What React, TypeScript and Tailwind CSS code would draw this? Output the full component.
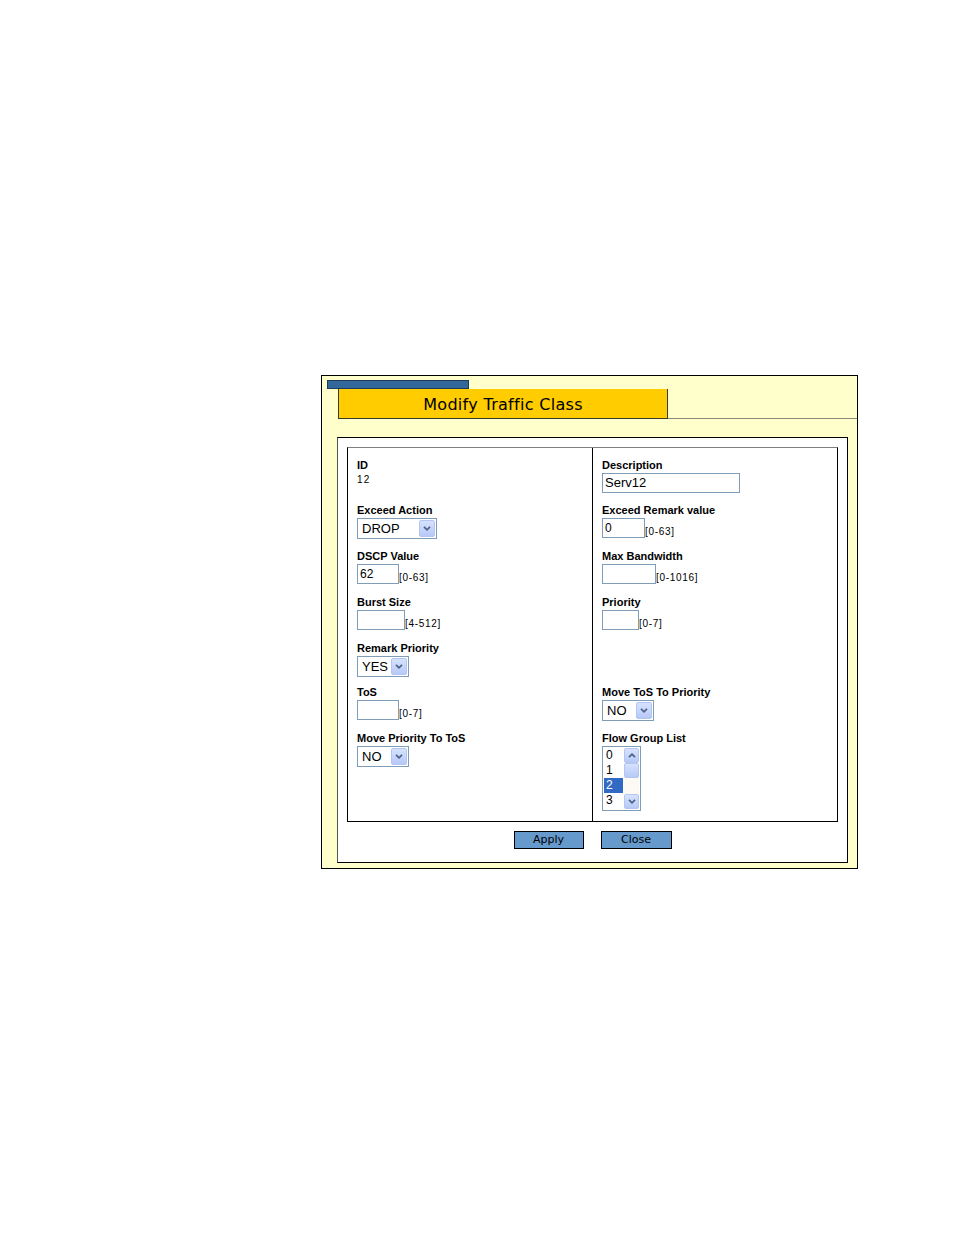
import React from "react";

const sans = { fontFamily: '"Liberation Sans", Arial, sans-serif' };
const verdana = { fontFamily: '"DejaVu Sans", Verdana, sans-serif' };

function Chevron({ up = false }: { up?: boolean }) {
    return (
        <svg width="8" height="5" viewBox="0 0 8 5">
            <path
                d={up ? "M1 4.2 L4 1.2 L7 4.2" : "M1 0.8 L4 3.8 L7 0.8"}
                fill="none"
                stroke="#4d6185"
                strokeWidth="1.7"
            />
        </svg>
    );
}

function Label({ children }: { children: React.ReactNode }) {
    return <div className="h-[14px] leading-[14px] text-[11px] font-bold text-black whitespace-nowrap">{children}</div>;
}

function Select({ value, className }: { value: string; className: string }) {
    return (
        <div className={"mt-[1px] flex items-center h-[21px] border border-[#7f9db9] bg-white " + className}>
            <span className="flex-1 pl-[4px] text-[13px] leading-[19px] text-black">{value}</span>
            <div className="mr-[1px] w-[16px] h-[17px] rounded-[2px] border border-[#b3c6f3] bg-gradient-to-b from-[#d6e2fd] to-[#b6c9f7] flex items-center justify-center">
                <Chevron />
            </div>
        </div>
    );
}

function Input({ value = "", className, range, big = false }: { value?: string; className: string; range?: string; big?: boolean }) {
    return (
        <div className="mt-[1px] flex items-end">
            <div
                className={
                    "h-[20px] border border-[#7f9db9] bg-white pl-[2px] leading-[18px] text-black " +
                    (big ? "text-[13px] " : "text-[12px] ") +
                    className
                }
            >
                {value}
            </div>
            {range && <span className="mb-[0px] text-[10px] leading-[12px] tracking-[0.7px] text-black">{range}</span>}
        </div>
    );
}

function ScrollBtn({ children }: { children?: React.ReactNode }) {
    return (
        <div className="h-[15px] rounded-[2px] border border-[#b3c6f3] bg-gradient-to-b from-[#d6e2fd] to-[#b6c9f7] flex items-center justify-center">
            {children}
        </div>
    );
}

export default function App() {
    return (
        <div className="w-[954px] min-h-[1235px] bg-white" style={sans}>
            <div className="pl-[321px] pt-[375px]">
                <div className="w-[537px] h-[494px] border border-black bg-[#ffffcc] flex flex-col">
                    <div className="ml-[5px] mt-[4px] w-[142px] h-[9px] bg-[#336699] border border-[#1d3b5c]" />
                    <div className="flex ml-[16px]">
                        <div
                            className="w-[330px] h-[30px] pt-[3px] bg-[#ffcc00] border-x border-b border-[#3a3a2a] flex items-center justify-center text-[16px] tracking-[0.3px] text-black"
                            style={verdana}
                        >
                            Modify Traffic Class
                        </div>
                        <div className="flex-1 border-b border-[#8a8a7a]" />
                    </div>

                    <div className="ml-[15px] mt-[18px] w-[511px] h-[426px] bg-white border border-black border-l-[#555] p-[9px] flex flex-col">
                        {/* form table */}
                        <div className="h-[375px] border border-black border-t-[#808080] flex">
                            <div className="w-[245px] border-r border-black pl-[9px] pt-[10px] flex flex-col">
                                <div className="h-[45px]">
                                    <Label>ID</Label>
                                    <div className="mt-[2px] text-[10px] leading-[12px] tracking-[1.2px] text-black">12</div>
                                </div>
                                <div className="h-[46px]">
                                    <Label>Exceed Action</Label>
                                    <Select value="DROP" className="w-[80px]" />
                                </div>
                                <div className="h-[46px]">
                                    <Label>DSCP Value</Label>
                                    <Input value="62" className="w-[42px]" range="[0-63]" />
                                </div>
                                <div className="h-[46px]">
                                    <Label>Burst Size</Label>
                                    <Input className="w-[48px]" range="[4-512]" />
                                </div>
                                <div className="h-[44px]">
                                    <Label>Remark Priority</Label>
                                    <Select value="YES" className="w-[52px]" />
                                </div>
                                <div className="h-[46px]">
                                    <Label>ToS</Label>
                                    <Input className="w-[42px]" range="[0-7]" />
                                </div>
                                <div>
                                    <Label>Move Priority To ToS</Label>
                                    <Select value="NO" className="w-[52px]" />
                                </div>
                            </div>

                            <div className="flex-1 pl-[9px] pt-[10px] flex flex-col">
                                <div className="h-[45px]">
                                    <Label>Description</Label>
                                    <Input value="Serv12" className="w-[138px]" big />
                                </div>
                                <div className="h-[46px]">
                                    <Label>Exceed Remark value</Label>
                                    <Input value="0" className="w-[43px]" range="[0-63]" />
                                </div>
                                <div className="h-[46px]">
                                    <Label>Max Bandwidth</Label>
                                    <Input className="w-[54px]" range="[0-1016]" />
                                </div>
                                <div className="h-[46px]">
                                    <Label>Priority</Label>
                                    <Input className="w-[37px]" range="[0-7]" />
                                </div>
                                <div className="h-[44px]" />
                                <div className="h-[46px]">
                                    <Label>Move ToS To Priority</Label>
                                    <Select value="NO" className="w-[52px]" />
                                </div>
                                <div>
                                    <Label>Flow Group List</Label>
                                    <div className="mt-[1px] w-[39px] h-[65px] border border-[#7f9db9] bg-white p-[1px] flex">
                                        <div className="w-[19px] flex flex-col text-[12px] leading-[15px] text-black">
                                            {["0", "1", "2", "3"].map((n) => (
                                                <div
                                                    key={n}
                                                    className={"h-[15px] pl-[2px] " + (n === "2" ? "bg-[#316ac5] text-white" : "")}
                                                >
                                                    {n}
                                                </div>
                                            ))}
                                        </div>
                                        <div className="flex-1 ml-[1px] flex flex-col bg-[#fdfaf3]">
                                            <ScrollBtn>
                                                <Chevron up />
                                            </ScrollBtn>
                                            <ScrollBtn />
                                            <div className="flex-1" />
                                            <ScrollBtn>
                                                <Chevron />
                                            </ScrollBtn>
                                        </div>
                                    </div>
                                </div>
                            </div>
                        </div>

                        <div className="mt-[9px] flex justify-center gap-[17px]" style={verdana}>
                            <button className="w-[70px] h-[18px] bg-[#6699cc] border border-black text-[11px] leading-[16px] text-black">
                                Apply
                            </button>
                            <button className="w-[71px] h-[18px] bg-[#6699cc] border border-black text-[11px] leading-[16px] text-black">
                                Close
                            </button>
                        </div>
                    </div>
                </div>
            </div>
        </div>
    );
}
